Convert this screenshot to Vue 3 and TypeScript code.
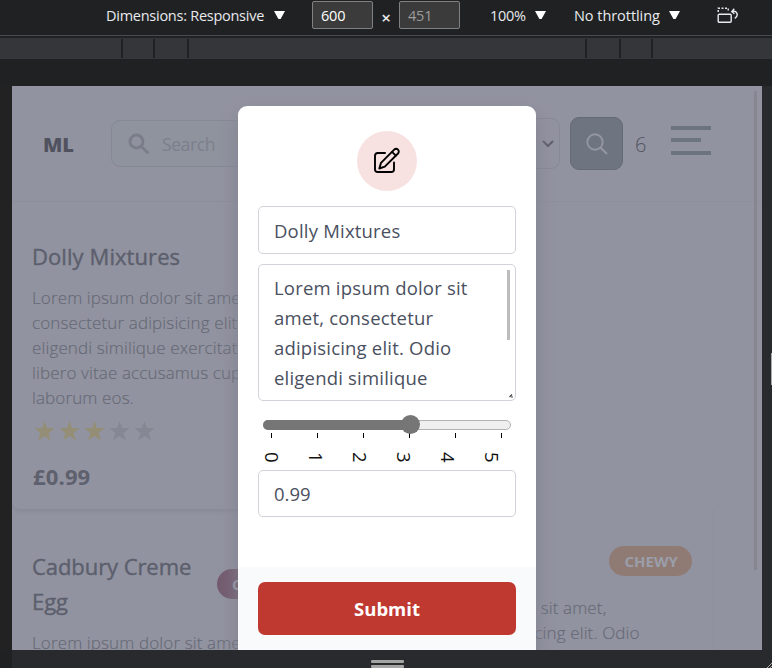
<script setup lang="ts">
import { ref } from 'vue'

interface Product {
  name: string
  lines: string[]
  badge?: string
  tone?: string
}

const title = ref('Dolly Mixtures')
const price = ref('0.99')
const rating = 3
const marks = [0, 1, 2, 3, 4, 5]
const breakpoints = ['b1', 'b2', 'b3', 'b4', 'b5', 'b6']
const description = ['Lorem ipsum dolor sit', 'amet, consectetur', 'adipisicing elit. Odio', 'eligendi similique']

const copy = [
  'Lorem ipsum dolor sit amet,',
  'consectetur adipisicing elit. Odio',
  'eligendi similique exercitationem',
  'libero vitae accusamus cupiditate',
  'laborum eos.',
]
const featured: Product = { name: 'Dolly Mixtures', lines: copy }
const products: Product[] = [
  { name: 'Cadbury Creme Egg', lines: copy.slice(0, 1), badge: 'CHOCOLATE', tone: 'plum' },
  { name: 'Chews', lines: copy.slice(0, 2), badge: 'CHEWY', tone: 'orange' },
]
</script>

<template>
  <div class="devtools">
    <header class="toolbar">
      <span class="dims">Dimensions: Responsive</span>
      <i class="caret c1"></i>
      <span class="size">600</span>
      <span class="times">×</span>
      <span class="size dim">451</span>
      <span class="zoomlevel">100%</span>
      <i class="caret c2"></i>
      <span class="throttle">No throttling</span>
      <i class="caret c3"></i>
      <svg class="rotate" width="22" height="18" viewBox="0 0 22 18" fill="none" stroke="#e8eaed" stroke-width="1.4">
        <rect x="1.2" y="7.200" width="13" height="8" rx="1" />
        <path d="M1.200 5V1.300H11.200V5" stroke-dasharray="2 1.500" />
        <path d="M14.800 4.800C19.500 2.800 22.500 8.200 17.800 11.400M17.200 1.800L14.800 4.600L17.400 6.800" />
      </svg>
    </header>
    <div class="ruler"><i v-for="b in breakpoints" :key="b" :class="b"></i></div>

    <main class="stage">
      <div class="page">
        <nav class="nav">
          <strong class="brand">ML</strong>
          <div class="search">
            <svg width="22" height="22" viewBox="0 0 22 22" fill="none" stroke="#7a7c89" stroke-width="2.800">
              <circle cx="8.500" cy="8.500" r="6.500" /><path d="M13.200 13.200L20.300 20.300" />
            </svg>
            <span>Search</span>
          </div>
          <div class="select">
            <svg width="12" height="8" viewBox="0 0 12 8" fill="none" stroke="#5c5f6a" stroke-width="2.100"><path d="M1 1L6 6L11 1" /></svg>
          </div>
          <div class="go">
            <svg width="22" height="22" viewBox="0 0 22 22" fill="none" stroke="#9496a2" stroke-width="1.900">
              <circle cx="9" cy="9" r="7.700" /><path d="M14.500 14.500L21 21" />
            </svg>
          </div>
          <span class="count">6</span>
          <div class="burger"><i></i><i class="short"></i><i></i></div>
        </nav>

        <section class="card featured">
          <h2>{{ featured.name }}</h2>
          <p><span v-for="l in featured.lines" :key="l">{{ l }}</span></p>
          <div class="stars">
            <svg v-for="n in 5" :key="n" :class="{ on: n <= rating }" width="25" height="24" viewBox="0 0 25 24">
              <path d="M12.500 2L15 9.100L22.500 9.300L16.600 14L18.800 21.400L12.500 17.100L6.200 21.400L8.400 14L2.500 9.300L10 9.100Z" />
            </svg>
          </div>
          <b class="price">£0.99</b>
        </section>

        <div class="row">
          <section v-for="p in products" :key="p.name" class="card" :class="p.tone">
            <div class="head">
              <h2>{{ p.name }}</h2>
              <span class="badge">{{ p.badge }}</span>
            </div>
            <p><span v-for="l in p.lines" :key="l">{{ l }}</span></p>
          </section>
        </div>

        <i class="scroll"></i>

        <form class="modal" @submit.prevent>
          <div class="body">
            <div class="circle">
              <svg width="28" height="28" viewBox="0 0 28 28" fill="none" stroke="#000" stroke-width="1.900" stroke-linecap="round" stroke-linejoin="round">
                <path d="M12 6H4.800Q2 6 2 8.800V22.200Q2 25 4.800 25H18.200Q21 25 21 22.200V15.500" />
                <path d="M6.300 21.500L8 15.900L21.200 2.700A2.650 2.650 0 0 1 25 6.500L11.800 19.700Z" />
                <path d="M19 4.900L22.800 8.700" />
              </svg>
            </div>
            <input v-model="title" class="field" type="text" />
            <div class="area">
              <p><span v-for="d in description" :key="d">{{ d }}</span></p>
              <i class="thumb"></i>
              <svg class="grip" width="4" height="4" viewBox="0 0 4 4" stroke="#444" stroke-width="1.300"><path d="M.5 3L3 .5M2.500 3.500L3.500 2.500" /></svg>
            </div>
            <div class="slider"><div class="fill"></div><div class="knob"></div></div>
            <div class="ticks"><i v-for="m in marks" :key="m"></i></div>
            <div class="labels"><span v-for="m in marks" :key="m">{{ m }}</span></div>
            <input v-model="price" class="field last" type="text" />
          </div>
          <footer class="foot"><button type="submit">Submit</button></footer>
        </form>
      </div>
    </main>
    <div class="bottom"><div class="handle"><i></i><i></i></div></div>
    <i class="side-handle"></i>
    <svg class="corner" width="5" height="5" viewBox="0 0 5 5" stroke="#aaa"><path d="M0 5L5 0M3 5L5 3" /></svg>
  </div>
</template>

<style>
body { margin: 0; background: #202124; }
</style>

<style scoped>
* { box-sizing: border-box; }
.devtools { position: relative; width: 772px; height: 668px; overflow: hidden; display: flex; flex-direction: column; background: #202123; font-family: "Open Sans", "Noto Sans", sans-serif; }
.toolbar { height: 36px; flex: none; border-bottom: 1px solid #4a4b4e; display: flex; align-items: flex-start; padding-left: 106px; color: #e8eaed; font-size: 14.500px; line-height: 31px; white-space: nowrap; }
.dims { width: 168px; letter-spacing: -0.260px; }
.caret { width: 11px; height: 8px; margin-top: 11px; background: #fff; clip-path: polygon(0 0, 100% 0, 60% 100%, 40% 100%); flex: none; }
.c1 { margin-right: 27px; }
.size { width: 61px; height: 28px; margin-top: 1px; line-height: 28px; padding-left: 8px; border: 1px solid #818181; border-radius: 2px; background: #3b3b3b; color: #fff; flex: none; letter-spacing: -0.200px; }
.times { width: 26px; text-align: center; font-size: 17px; font-weight: 600; line-height: 36px; }
.size.dim { color: #9b9b9b; }
.zoomlevel { width: 45px; margin-left: 30px; letter-spacing: -0.300px; }
.c2 { margin-right: 28px; }
.throttle { width: 95px; letter-spacing: -0.050px; }
.rotate { margin: 7px 0 0 37px; }
.ruler { height: 21px; margin-top: 2px; flex: none; background: #35363a; display: flex; padding: 1px 0 1px 121px; }
.ruler i { width: 2px; background: #202123; margin-right: 30px; }
.ruler .b2 { margin-right: 32px; }
.ruler .b3 { margin-right: 396px; }
.ruler .b4 { margin-right: 32px; }
.stage { height: 591px; flex: none; padding: 27px 0 0 12px; background: linear-gradient(#202123, #202123) 0 0 / 100% 27px no-repeat, linear-gradient(90deg, #222223 12px, #292a2d 12px); }
.page { position: relative; width: 750px; height: 564px; overflow: hidden; background: #9293a0; }
.nav { height: 116px; border-bottom: 1px solid #8d909c; display: flex; align-items: center; padding-left: 31px; }
.brand { width: 68px; font-size: 20px; font-weight: 800; color: #50535f; letter-spacing: -0.200px; padding-top: 1px; }
.search { width: 290px; height: 47px; border: 1px solid #858895; border-radius: 9px; background: #8f939e; display: flex; align-items: center; padding-left: 16px; gap: 12px; color: #7c7f8c; font-size: 17.500px; letter-spacing: -0.400px; }
.select { width: 120px; height: 51px; margin-left: 39px; border: 1px solid #878995; border-radius: 9px; display: flex; align-items: center; justify-content: flex-end; padding-right: 5px; }
.go { width: 53px; height: 53px; margin-left: 10px; border: 1px solid #646b76; border-radius: 9px; background: #6e7580; display: flex; align-items: center; justify-content: center; }
.count { width: 48px; padding: 1px 0 0 12px; font-size: 20px; font-weight: 300; color: #50535f; }
.burger { width: 40px; height: 29px; display: flex; flex-direction: column; justify-content: space-between; margin-top: -7px; }
.burger i { height: 4px; background: #6c747f; }
.burger .short { width: 30px; }
.card h2 { margin: 0; font-size: 22px; line-height: 35px; font-weight: 400; -webkit-text-stroke: 0.400px #5c5f6d; color: #5c5f6d; letter-spacing: 0.080px; white-space: nowrap; }
.card p { margin: 0; color: #666a76; font-size: 17px; font-weight: 300; -webkit-text-stroke: 0.150px #666a76; line-height: 25px; letter-spacing: 0.130px; }
.card p span { display: block; white-space: nowrap; }
.featured { height: 307px; width: 350px; padding: 37px 20px 0; border-radius: 0 0 8px 8px; box-shadow: 0 2px 4px #868894; }
.featured p { margin-top: 11px; }
.stars { height: 26px; display: flex; margin-top: 9px; }
.stars svg { fill: #858893; }
.stars .on { fill: #938e75; }
.price { display: block; margin-top: 15px; font-size: 22px; line-height: 32px; color: #5e606d; letter-spacing: 0.150px; padding-left: 1px; }
.row { display: flex; width: 702px; }
.row .card { width: 357px; padding: 39px 20px 0; height: 200px; }
.row .card.orange { width: 345px; border-right: 1px solid #8e8f9c; }
.head { display: flex; align-items: center; gap: 20px; }
.plum .head { height: 71px; margin-bottom: 11px; }
.card.plum h2 { width: 165px; letter-spacing: -0.070px; white-space: normal; }
.orange .head { height: 36px; margin: -5px 0 16px; justify-content: space-between; }
.orange p { margin-left: -1px; }
.badge { height: 30px; border-radius: 15px; padding: 0 15px; font-size: 15px; line-height: 31px; font-weight: 700; color: #9b9eaa; background: #735b6e; }
.orange .badge { background: #8f7b74; letter-spacing: 0.050px; margin-right: 1px; padding: 0 14px 0 15px; }
.scroll { position: absolute; left: 742px; top: 5px; width: 3px; height: 479px; background: #85868f; }
.modal { position: absolute; left: 226px; top: 20px; width: 298px; height: 560px; background: #fff; border-radius: 9px; box-shadow: 0 10px 20px #80828f; display: flex; flex-direction: column; }
.body { height: 461px; padding: 25px 20px 0; display: flex; flex-direction: column; }
.circle { width: 60px; height: 60px; border-radius: 50%; background: #f7e2e1; align-self: center; margin-bottom: 15px; display: flex; align-items: center; justify-content: center; }
.field { display: block; width: 258px; height: 48px; flex: none; border: 1px solid #d1d3da; border-radius: 5px; padding: 0 15px; font: 400 18.500px "Open Sans", sans-serif; color: #4a5060; outline: 0; background: #fff; letter-spacing: 0.200px; }
.area { position: relative; width: 258px; height: 137px; margin-top: 10px; border: 1px solid #d1d3da; border-radius: 5px; padding: 8px 15px; color: #4a5060; font-size: 18.500px; line-height: 30px; letter-spacing: 0.200px; }
.area p { margin: 0; }
.area p span { display: block; white-space: nowrap; }
.thumb { position: absolute; right: 5px; top: 5px; width: 3px; height: 70px; background: #bcbcbc; }
.grip { position: absolute; right: 2px; bottom: 2px; }
.slider { position: relative; width: 248px; height: 10px; margin: 19px 5px 0; border: 1px solid #b2b2b2; border-radius: 5px; background: #efefef; }
.fill { width: 147px; height: 10px; margin: -1px; border-radius: 5px 0 0 5px; background: #767676; }
.knob { position: absolute; left: 137px; top: -6px; width: 19px; height: 19px; border-radius: 50%; background: #767676; }
.ticks { display: flex; justify-content: space-between; margin: 3px 14px 0 13px; height: 5px; }
.ticks i { width: 1px; background: #000; }
.labels { display: flex; height: 32px; gap: 22px; margin-left: 3px; }
.labels span { width: 22px; height: 18px; flex: none; writing-mode: vertical-rl; font-size: 18.500px; line-height: 22px; color: #111; margin-top: 14px; }
.field.last { height: 47px; letter-spacing: 0; }
.foot { flex: 1; background: #f9fafc; padding: 15px 20px; }
.foot button { display: block; width: 258px; height: 53px; border: 0; border-radius: 7px; background: #c03931; color: #fff; font: 700 18.500px "Open Sans", sans-serif; }
.bottom { height: 18px; margin-left: 12px; background: #292a2d; display: flex; justify-content: center; padding-right: 10px; }
.handle { margin-top: 10px; width: 33px; height: 8px; display: flex; flex-direction: column; gap: 2px; }
.handle i { height: 3px; background: #a4a5a3; border-radius: 1px; }
.side-handle { position: absolute; right: 0; top: 353px; width: 1px; height: 32px; background: #aaa; }
.corner { position: absolute; right: 0; bottom: 0; }
</style>
